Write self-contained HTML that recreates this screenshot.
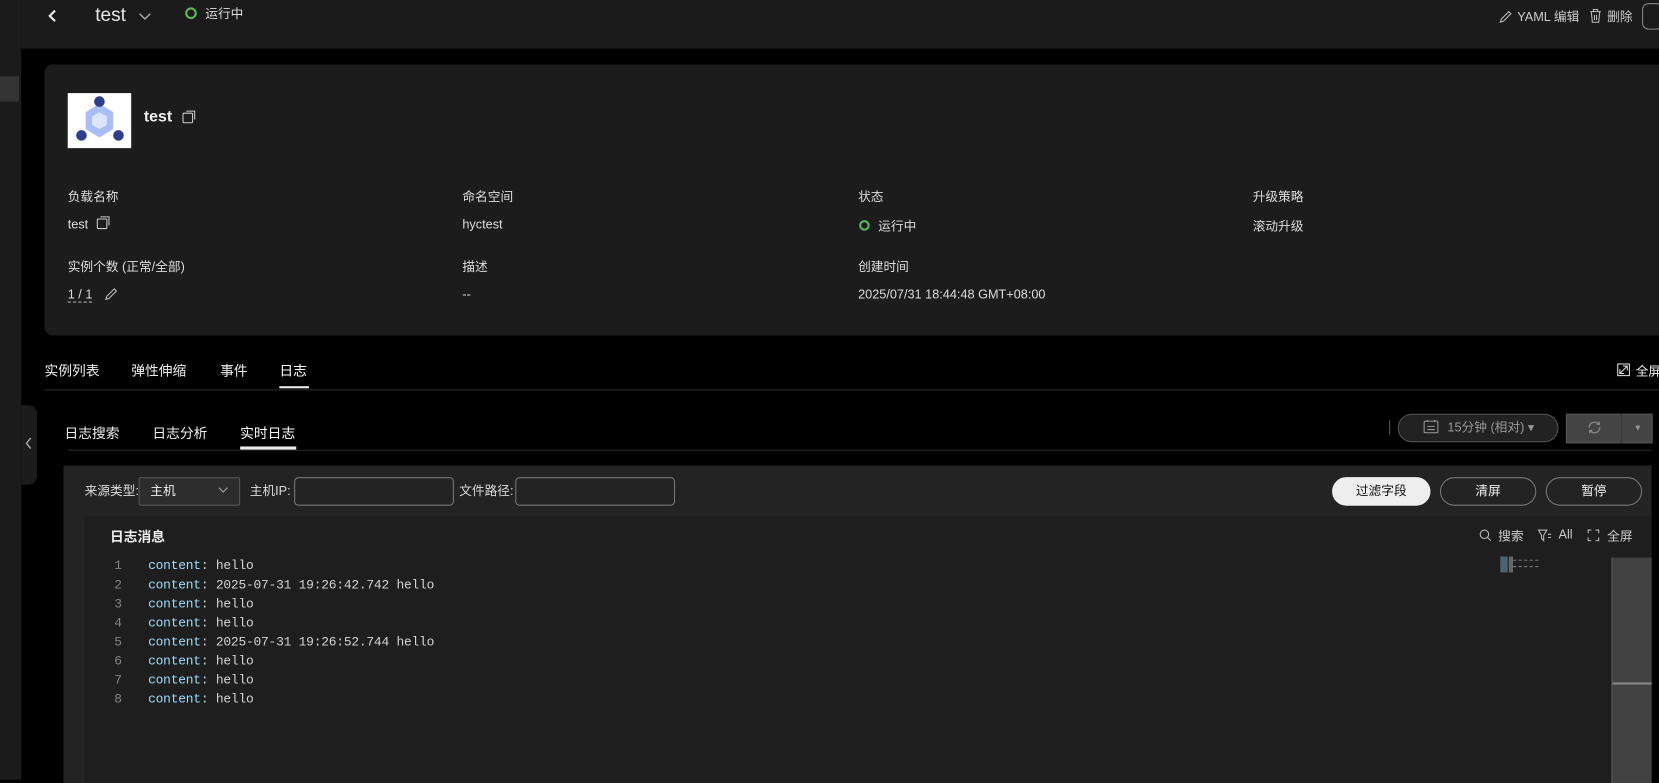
<!DOCTYPE html>
<html><head><meta charset="utf-8"><style>
*{box-sizing:border-box;margin:0;padding:0}
body{width:1659px;height:780px;background:#000;font-family:"Liberation Sans","Noto Sans CJK SC",sans-serif;color:#ddd;font-size:12px;position:relative;overflow:hidden}
#w{position:absolute;left:0;top:0;width:1568px;height:737px;transform:scale(1.05804);transform-origin:0 0}
.a{position:absolute;white-space:nowrap}
.lbl{color:#ddd;font-size:12px;margin-top:-2px}
.btn{position:absolute;height:27px;border:1px solid #777;border-radius:14px;text-align:center;line-height:25px;font-size:12px;color:#eee}
.code{font-family:"Liberation Mono","DejaVu Sans Mono",monospace;font-size:12.2px;line-height:18px}
.k{color:#9cdcfe}
</style></head><body><div id="w">
<div class="a" style="left:0;top:0;width:20px;height:737px;background:#1b1b1b"></div>
<div class="a" style="left:0;top:72px;width:18px;height:24px;background:#333"></div>
<div class="a" style="left:20px;top:0;width:1548px;height:46px;background:#1b1b1b"></div>
<svg class="a" style="left:44px;top:8px" width="12" height="14"><path d="M8 2 L3 7 L8 12" stroke="#eee" stroke-width="2" fill="none"/></svg>
<div class="a" style="left:90px;top:4px;font-size:18px;color:#e8e8e8">test</div>
<svg class="a" style="left:131px;top:12px" width="12" height="8"><path d="M1 1 L6 6 L11 1" stroke="#aaa" stroke-width="1.3" fill="none"/></svg>
<div class="a" style="left:175px;top:7px;width:11px;height:11px;border:2px solid #5bb55b;border-radius:50%"></div>
<div class="a" style="left:194px;top:4px;font-size:12px;color:#ddd">运行中</div>
<svg class="a" style="left:1416px;top:9px" width="14" height="14"><path d="M2 12 L3 9 L10 2 L12 4 L5 11 Z" stroke="#bbb" fill="none"/></svg>
<div class="a" style="left:1434px;top:7px;color:#ccc">YAML 编辑</div>
<svg class="a" style="left:1502px;top:8px" width="12" height="14"><path d="M1 3h10M4 3V1h4v2M2 3l1 10h6l1-10M5 6v5M7 6v5" stroke="#bbb" fill="none"/></svg>
<div class="a" style="left:1519px;top:7px;color:#ccc">删除</div>
<div class="a" style="left:1552px;top:3px;width:20px;height:25px;border:1px solid #888;border-radius:6px"></div>

<div class="a" style="left:42px;top:61px;width:1540px;height:256px;background:#1c1c1c;border-radius:8px"></div>
<div class="a" style="left:64px;top:88px;width:60px;height:52px;background:#fff"></div>
<svg class="a" style="left:64px;top:88px" width="60" height="52">
<polygon points="30,10 43,18 43,34 30,42 17,34 17,18" fill="#a9bdf6"/><polygon points="30,18 37,22 37,30 30,34 23,30 23,22" fill="#dce6ff"/>
<circle cx="30" cy="8" r="5" fill="#2d3f8a"/><circle cx="13" cy="40" r="5" fill="#2d3f8a"/><circle cx="48" cy="40" r="5" fill="#2d3f8a"/></svg>
<div class="a" style="left:136px;top:102px;font-size:15px;font-weight:bold;color:#eee">test</div>
<svg class="a" style="left:172px;top:104px" width="14" height="14"><rect x="1" y="3" width="9" height="9" rx="1" stroke="#ccc" fill="none"/><path d="M4 1h8v8" stroke="#ccc" fill="none"/></svg>
<div class="a lbl" style="left:64px;top:179px">负载名称</div>
<div class="a lbl" style="left:437px;top:179px">命名空间</div>
<div class="a lbl" style="left:811px;top:179px">状态</div>
<div class="a lbl" style="left:1184px;top:179px">升级策略</div>
<div class="a lbl" style="left:64px;top:207px">test</div>
<svg class="a" style="left:91px;top:204px" width="14" height="14"><rect x="1" y="3" width="9" height="9" rx="1" stroke="#ccc" fill="none"/><path d="M4 1h8v8" stroke="#ccc" fill="none"/></svg>
<div class="a lbl" style="left:437px;top:207px">hyctest</div>
<div class="a" style="left:812px;top:208px;width:10px;height:10px;border:2px solid #5bb55b;border-radius:50%"></div>
<div class="a lbl" style="left:830px;top:207px">运行中</div>
<div class="a lbl" style="left:1184px;top:207px">滚动升级</div>
<div class="a lbl" style="left:64px;top:245px">实例个数 (正常/全部)</div>
<div class="a lbl" style="left:437px;top:245px">描述</div>
<div class="a lbl" style="left:811px;top:245px">创建时间</div>
<div class="a lbl" style="left:64px;top:273px;border-bottom:1px dashed #aaa">1 / 1</div>
<svg class="a" style="left:98px;top:271px" width="14" height="14"><path d="M2 12 L3 9 L10 2 L12 4 L5 11 Z" stroke="#bbb" fill="none"/></svg>
<div class="a lbl" style="left:437px;top:273px">--</div>
<div class="a lbl" style="left:811px;top:273px">2025/07/31 18:44:48 GMT+08:00</div>

<div class="a" style="left:42px;top:340px;font-size:13px;color:#eee">实例列表</div>
<div class="a" style="left:124px;top:340px;font-size:13px;color:#eee">弹性伸缩</div>
<div class="a" style="left:208px;top:340px;font-size:13px;color:#eee">事件</div>
<div class="a" style="left:264px;top:340px;font-size:13px;color:#fff">日志</div>
<div class="a" style="left:264px;top:365px;width:28px;height:2px;background:#eee"></div>
<div class="a" style="left:42px;top:368px;width:1526px;height:1px;background:#2a2a2a"></div>
<svg class="a" style="left:1528px;top:343px" width="13" height="13"><rect x="1" y="1" width="11" height="11" stroke="#ddd" fill="none"/><path d="M3 10L10 3M6 3h4v4M3 6v4h4" stroke="#ddd" fill="none"/></svg>
<div class="a" style="left:1546px;top:342px;color:#eee">全屏</div>

<div class="a" style="left:20px;top:383px;width:15px;height:75px;background:#1c1c1c;border-radius:0 8px 8px 0"></div>
<svg class="a" style="left:23px;top:413px" width="8" height="12"><path d="M6 1 L2 6 L6 11" stroke="#aaa" stroke-width="1.3" fill="none"/></svg>

<div class="a" style="left:61px;top:399px;font-size:13px;color:#eee">日志搜索</div>
<div class="a" style="left:144px;top:399px;font-size:13px;color:#eee">日志分析</div>
<div class="a" style="left:227px;top:399px;font-size:13px;color:#fff">实时日志</div>
<div class="a" style="left:227px;top:422px;width:53px;height:3px;background:#eee"></div>
<div class="a" style="left:64px;top:425px;width:1497px;height:1px;background:#2a2a2a"></div>
<div class="a" style="left:1313px;top:397px;width:1px;height:14px;background:#555"></div>
<div class="a" style="left:1321px;top:391px;width:152px;height:27px;border:1px solid #555;border-radius:14px;background:#222;color:#999;line-height:24px;padding-left:46px">15分钟 (相对) ▾</div>
<svg class="a" style="left:1345px;top:396px" width="15" height="14"><rect x="1" y="2" width="13" height="11" rx="1" stroke="#999" fill="none"/><path d="M4 1v2M11 1v2M4 7h7M4 10h7" stroke="#999"/></svg>
<div class="a" style="left:1480px;top:391px;width:82px;height:28px;background:#444;border:1px solid #555"></div>
<div class="a" style="left:1532px;top:391px;width:1px;height:28px;background:#3a3a3a"></div>
<svg class="a" style="left:1499px;top:396px" width="16" height="16"><path d="M3 8a5 5 0 0 1 9-3M13 8a5 5 0 0 1-9 3M10 5h2.5V2.5M6 11H3.5v2.5" stroke="#888" stroke-width="1.3" fill="none"/></svg>
<div class="a" style="left:1544px;top:400px;color:#999;font-size:8px">▼</div>

<div class="a" style="left:60px;top:440px;width:1501px;height:300px;background:#232323"></div>
<div class="a lbl" style="left:80px;top:457px">来源类型:</div>
<div class="a" style="left:131px;top:451px;width:96px;height:27px;background:#2d2d2d;border:1px solid #555;border-radius:2px;padding-left:10px;line-height:25px;color:#eee">主机</div>
<svg class="a" style="left:206px;top:460px" width="10" height="7"><path d="M1 1 L5 5 L9 1" stroke="#aaa" fill="none"/></svg>
<div class="a lbl" style="left:236px;top:457px">主机IP:</div>
<div class="a" style="left:278px;top:451px;width:151px;height:27px;border:1px solid #777;border-radius:4px"></div>
<div class="a lbl" style="left:434px;top:457px">文件路径:</div>
<div class="a" style="left:487px;top:451px;width:151px;height:27px;border:1px solid #777;border-radius:4px"></div>
<div class="btn" style="left:1259px;top:451px;width:93px;background:#eee;color:#111;border-color:#eee">过滤字段</div>
<div class="btn" style="left:1361px;top:451px;width:91px">清屏</div>
<div class="btn" style="left:1461px;top:451px;width:91px">暂停</div>

<div class="a" style="left:80px;top:488px;width:1481px;height:252px;background:#1e1e1e"></div>
<div class="a" style="left:104px;top:497px;font-size:13px;font-weight:bold;color:#eee">日志消息</div>
<svg class="a" style="left:1398px;top:500px" width="12" height="12"><circle cx="5" cy="5" r="4" stroke="#bbb" fill="none"/><path d="M8 8l3 3" stroke="#bbb"/></svg>
<div class="a" style="left:1416px;top:498px;color:#ccc">搜索</div>
<svg class="a" style="left:1453px;top:500px" width="14" height="12"><path d="M1 1h8L6 6v5L4 9V6Z" stroke="#bbb" fill="none"/><path d="M10 5h3M10 8h3" stroke="#bbb"/></svg>
<div class="a" style="left:1473px;top:498px;color:#ccc">All</div>
<svg class="a" style="left:1500px;top:500px" width="12" height="12"><path d="M1 4V1h3M8 1h3v3M11 8v3H8M4 11H1V8" stroke="#bbb" fill="none"/></svg>
<div class="a" style="left:1519px;top:498px;color:#ccc">全屏</div>
<div class="a" style="left:1418px;top:526px;width:7px;height:15px;background:#4c6374"></div>
<div class="a" style="left:1426px;top:526px;width:4px;height:15px;background:#666"></div>
<div class="a" style="left:1430px;top:529px;width:24px;height:1px;border-top:1px dashed #777"></div>
<div class="a" style="left:1430px;top:535px;width:24px;height:1px;border-top:1px dashed #777"></div>
<div class="a" style="left:1523px;top:527px;width:38px;height:213px;background:#424242;border-left:1px solid #555"></div>
<div class="a" style="left:1524px;top:645px;width:37px;height:2px;background:#888"></div>

<div class="a code" style="left:108px;top:526px;color:#858585">1<br>2<br>3<br>4<br>5<br>6<br>7<br>8</div>
<div class="a code" style="left:140px;top:526px;color:#d4d4d4;white-space:pre;letter-spacing:-0.2px"><span class="k">content</span>: hello
<span class="k">content</span>: 2025-07-31 19:26:42.742 hello
<span class="k">content</span>: hello
<span class="k">content</span>: hello
<span class="k">content</span>: 2025-07-31 19:26:52.744 hello
<span class="k">content</span>: hello
<span class="k">content</span>: hello
<span class="k">content</span>: hello</div>
</div></body></html>
